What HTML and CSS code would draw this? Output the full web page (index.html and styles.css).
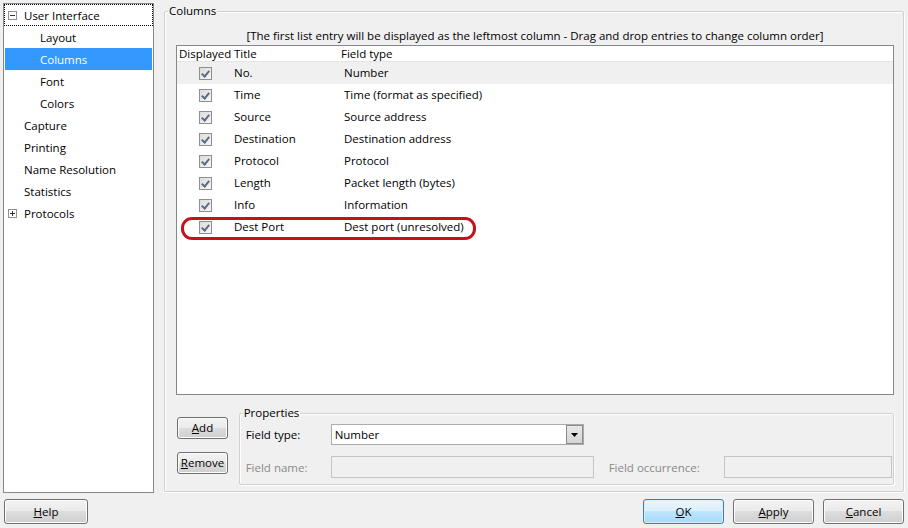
FILE: index.html
```html
<!DOCTYPE html>
<html>
<head>
<meta charset="utf-8">
<link rel="stylesheet" href="styles.css">
</head>
<body>
<div class="dialog">
  <div class="top">
    <div class="tree">
      <div class="node focus"><span class="exp"><svg width="9" height="9" viewBox="0 0 9 9"><rect x="0.5" y="0.5" width="8" height="8" fill="#fff" stroke="#919191"/><path d="M2 4.5h5" stroke="#333" stroke-width="1"/></svg></span><span>User Interface</span></div>
      <div class="node child">Layout</div>
      <div class="node child sel">Columns</div>
      <div class="node child">Font</div>
      <div class="node child">Colors</div>
      <div class="node lvl1">Capture</div>
      <div class="node lvl1">Printing</div>
      <div class="node lvl1">Name Resolution</div>
      <div class="node lvl1">Statistics</div>
      <div class="node"><span class="exp"><svg width="9" height="9" viewBox="0 0 9 9"><rect x="0.5" y="0.5" width="8" height="8" fill="#fff" stroke="#919191"/><path d="M2 4.5h5M4.5 2v5" stroke="#333" stroke-width="1"/></svg></span><span>Protocols</span></div>
    </div>
    <div class="group columns">
      <div class="gtitle">Columns</div>
      <div class="info">[The first list entry will be displayed as the leftmost column - Drag and drop entries to change column order]</div>
      <div class="list">
        <div class="lhead"><span class="c1">Displayed</span><span class="c2">Title</span><span class="c3">Field type</span></div>
        <div class="row hot"><span class="c1"><i class="cb"></i></span><span class="c2">No.</span><span class="c3">Number</span></div>
        <div class="row"><span class="c1"><i class="cb"></i></span><span class="c2">Time</span><span class="c3">Time (format as specified)</span></div>
        <div class="row"><span class="c1"><i class="cb"></i></span><span class="c2">Source</span><span class="c3">Source address</span></div>
        <div class="row"><span class="c1"><i class="cb"></i></span><span class="c2">Destination</span><span class="c3">Destination address</span></div>
        <div class="row"><span class="c1"><i class="cb"></i></span><span class="c2">Protocol</span><span class="c3">Protocol</span></div>
        <div class="row"><span class="c1"><i class="cb"></i></span><span class="c2">Length</span><span class="c3">Packet length (bytes)</span></div>
        <div class="row"><span class="c1"><i class="cb"></i></span><span class="c2">Info</span><span class="c3">Information</span></div>
        <div class="row marked"><span class="c1"><i class="cb"></i></span><span class="c2">Dest Port</span><span class="c3">Dest port (unresolved)</span></div>
      </div>
      <div class="bottom">
        <div class="btncol">
          <button class="btn small"><u>A</u>dd</button>
          <button class="btn small"><u>R</u>emove</button>
        </div>
        <div class="group props">
          <div class="gtitle">Properties</div>
          <div class="prow first">
            <span class="lbl">Field type:</span>
            <div class="select"><span class="sval">Number</span><span class="sbtn"><svg width="7" height="4" viewBox="0 0 7 4"><path d="M0 0h7L3.5 4z" fill="#000"/></svg></span></div>
          </div>
          <div class="prow">
            <span class="lbl dis">Field name:</span>
            <div class="input name"></div>
            <span class="lbl dis occ">Field occurrence:</span>
            <div class="input occin"></div>
          </div>
        </div>
      </div>
    </div>
  </div>
  <div class="footer">
    <button class="btn big help"><u>H</u>elp</button>
    <div class="spacer"></div>
    <button class="btn big def"><u>O</u>K</button>
    <button class="btn big"><u>A</u>pply</button>
    <button class="btn big"><u>C</u>ancel</button>
  </div>
</div>
</body>
</html>
```

FILE: styles.css
```css
* { box-sizing: border-box; }
html, body { margin: 0; padding: 0; }
body {
  width: 908px;
  height: 528px;
  background: #f0f0f0;
  font-family: "Open Sans", "Noto Sans", sans-serif;
  font-size: 11.5px;
  color: #000;
  overflow: hidden;
}
.dialog { display: flex; flex-direction: column; width: 908px; height: 528px; }
.top { display: flex; padding: 3px 0 0 3px; height: 496px; }

/* tree */
.tree {
  width: 151px;
  height: 490px;
  background: #fff;
  border: 1px solid #828790;
  padding: 0;
}
.node {
  height: 22px;
  line-height: 21px;
  display: flex;
  align-items: center;
  padding-left: 20px;
  white-space: nowrap;
}
.node .exp { width: 16px; margin-left: -16px; display: flex; align-items: center; }
.node.focus { outline: 1px dotted #000; outline-offset: -1px; }
.node.child { padding-left: 36px; }
.node.sel { background: #3399ff; color: #fff; margin: 0 1px; padding-left: 35px; }

/* group boxes */
.group {
  border: 1px solid #d0d0d0;
  border-radius: 2px;
  box-shadow: inset 1px 1px 0 #fff, 1px 1px 0 #fff;
  display: flex;
  flex-direction: column;
}
.gtitle {
  align-self: flex-start;
  margin-top: -9px;
  padding: 0 1px;
  background: #f0f0f0;
  line-height: 16px;
  height: 16px;
}
.columns {
  margin: 8px 0 0 10px;
  width: 740px;
  height: 481px;
  padding: 0 9px 0 11px;
}
.columns > .gtitle { margin-left: -8px; }
.info {
  text-align: center;
  height: 17px;
  line-height: 17px;
  margin-top: 8px;
  margin-bottom: 1px;
  white-space: nowrap;
}

/* list */
.list {
  height: 350px;
  background: #fff;
  border: 1px solid #828790;
}
.lhead {
  display: flex;
  height: 16px;
  line-height: 15px;
  border-bottom: 1px solid #e5e5e5;
}
.lhead .c1 { padding-left: 2px; }
.row {
  display: flex;
  height: 22px;
  line-height: 22px;
  align-items: center;
  position: relative;
}
.row.hot { background: #f0f0f0; }
.c1 { width: 56px; display: flex; justify-content: center; }
.lhead .c1 { justify-content: flex-start; }
.c2 { width: 108px; padding-left: 1px; }
.row .c2 { padding-left: 1px; }
.c3 { padding-left: 0; }
.row .c3 { padding-left: 3px; }
.cb {
  width: 13px;
  height: 13px;
  border: 1px solid #8f8f8f;
  background: linear-gradient(135deg, #dcdcdc, #f6f6f6);
  display: block;
  margin-left: 1px;
  position: relative;
}
.cb::after {
  content: "";
  position: absolute;
  left: 3px;
  top: 1px;
  width: 3px;
  height: 6px;
  border-right: 2px solid #5a6c84;
  border-bottom: 2px solid #5a6c84;
  transform: rotate(40deg);
}
.row.marked::after {
  content: "";
  box-sizing: border-box;
  position: absolute;
  left: 4px;
  top: 1px;
  width: 295px;
  height: 23px;
  border: 3px solid #c4121d;
  border-radius: 11px;
}

/* bottom */
.bottom { display: flex; padding-top: 18px; padding-left: 1px; }
.btncol { display: flex; flex-direction: column; gap: 13px; padding-top: 4px; width: 62px; }
.btn {
  font-family: inherit;
  font-size: 11.5px;
  color: #000;
  border: 1px solid #707070;
  border-radius: 3px;
  background: linear-gradient(#f2f2f2 0, #ebebeb 50%, #dddddd 50%, #cfcfcf 100%);
  box-shadow: inset 0 0 0 1px #fcfcfc;
  padding: 0;
  line-height: 18px;
}
.btn.small { width: 51px; height: 22px; }
.btn.big { width: 81px; height: 25px; }
.btn.big.help { width: 84px; }
.btn.def {
  border-color: #3c7fb1;
  background: linear-gradient(#eaf6fd 0, #d9f0fc 50%, #bee6fd 50%, #a7d9f5 100%);
  box-shadow: inset 0 0 0 1px #d8eef8;
}
.btn u { text-decoration: underline; }

.props {
  width: 659px;
  height: 72px;
  margin-top: 0;
  padding: 0 0 0 6px;
}
.props > .gtitle { margin-left: -3px; }
.prow { display: flex; align-items: center; height: 22px; }
.prow.first { margin-top: 3px; height: 21px; }
.prow + .prow { margin-top: 11px; }
.lbl { width: 85px; white-space: nowrap; }
.dis { color: #8a8a8a; }
.select {
  width: 253px;
  height: 21px;
  border: 1px solid #ababab;
  background: #fff;
  display: flex;
  align-items: stretch;
}
.sval { flex: 1; padding-left: 3px; line-height: 19px; }
.sbtn {
  width: 17px;
  border: 1px solid #8b8b8b;
  background: linear-gradient(#e8e8e8, #d4d4d4);
  display: flex;
  align-items: center;
  justify-content: center;
}
.input {
  height: 22px;
  border: 1px solid #c5c5c5;
  background: #f0f0f0;
}
.input.name { width: 263px; }
.occ { margin-left: 15px; width: 115px; }
.input.occin { width: 168px; }

/* footer */
.footer {
  display: flex;
  padding: 3px 0 0 4px;
  gap: 9px;
}
.spacer { flex: 1; }
.footer .btn.big:last-child { margin-right: 4px; }
```
